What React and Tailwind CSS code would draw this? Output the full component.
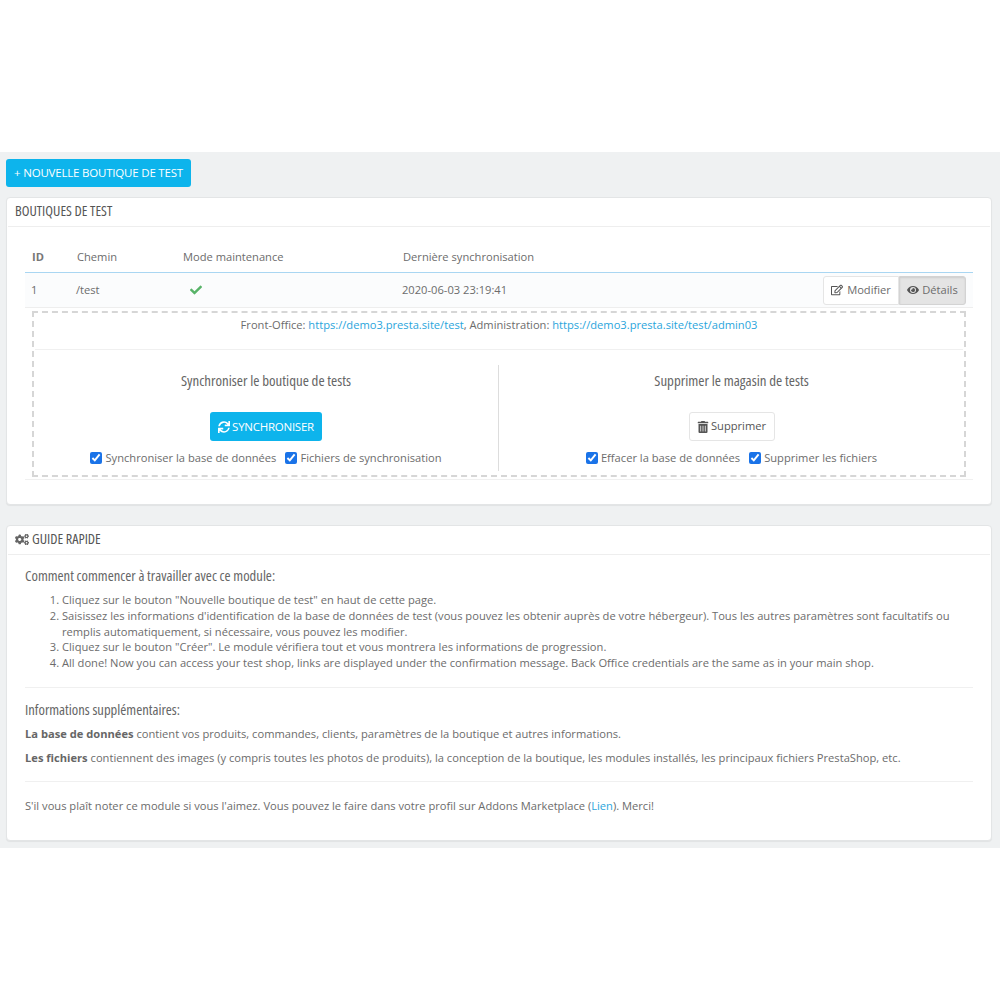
import React from "react";
import { FaCheck, FaCogs, FaEye, FaRegEdit, FaSync, FaTrashAlt } from "react-icons/fa";

const sans = "font-['Open_Sans','Liberation_Sans',sans-serif]";
const head = "font-['Open_Sans','Liberation_Sans',sans-serif] [font-stretch:75%]";

function Check({ label }) {
  return (
    <label className="flex items-center gap-[3px]">
      <input type="checkbox" checked readOnly className="m-0 w-[12px] h-[12px] accent-[#1a73e8]" />
      <span>{label}</span>
    </label>
  );
}

function Link({ children }) {
  return <a className="text-[#2aa5dc]">{children}</a>;
}

function PanelHeader({ children }) {
  return (
    <div className={`h-[29px] mx-px pb-[2px] border-b border-[#eeeeee] flex items-center gap-[3px] pl-[7px] text-[14.2px] text-[#555555] ${head}`}>
      {children}
    </div>
  );
}

export default function App() {
  return (
    <div className={`w-[1000px] h-[1000px] bg-white text-[#6c6c6c] text-[11.15px] ${sans}`}>
      <div className="h-[152px]" />
      <div className="h-[696px] bg-[#eff1f2] pt-[7px] pl-[6px] pr-[8px]">
        <button className="h-[28px] w-[185px] rounded-[3px] bg-[#0db4ec] text-white text-[11.5px] flex items-center justify-center whitespace-nowrap tracking-[-0.2px]">
          + NOUVELLE BOUTIQUE DE TEST
        </button>

        <section className="mt-[10px] h-[308px] bg-white rounded-[4px] border border-[#e3e5e6] shadow-[0_1px_1px_rgba(0,0,0,0.06)]">
          <PanelHeader>BOUTIQUES DE TEST</PanelHeader>
          <div className="mx-[18px]">
            <div className="mt-[16px] h-[30px] pb-[1px] border-b border-[#a9d6f2] grid grid-cols-[45px_106px_220px_1fr] pl-[7px] items-center">
              <span className="font-bold text-[#777777]">ID</span>
              <span>Chemin</span>
              <span>Mode maintenance</span>
              <span>Dernière synchronisation</span>
            </div>
            <div className="h-[35px] bg-[#fbfcfd] border-b border-[#eeeeee] grid grid-cols-[45px_106px_220px_1fr] pl-[7px] items-center">
              <span className="-ml-[1px]">1</span>
              <span className="-ml-[1px]">/test</span>
              <span className="pl-[7px]"><FaCheck className="w-[12px] h-[12px] text-[#58b368]" /></span>
              <div className="flex items-center justify-between -ml-[1px] pr-[7px]">
                <span>2020-06-03 23:19:41</span>
                <div className="flex h-[29px]">
                  <span className="w-[76px] flex items-center justify-center gap-[4px] bg-white border border-[#e5e5e5] rounded-l-[3px]">
                    <FaRegEdit className="w-[12px] h-[12px] text-[#555555]" /> Modifier
                  </span>
                  <span className="w-[67px] flex items-center justify-center gap-[3px] bg-[#e4e4e4] border border-[#d3d3d3] rounded-r-[3px] shadow-[inset_0_1px_2px_rgba(0,0,0,0.1)]">
                    <FaEye className="w-[12px] h-[12px] text-[#555555]" /> Détails
                  </span>
                </div>
              </div>
            </div>
            <div className="mt-[3px] mx-[7px] h-[166px] border-2 border-dashed border-[#d6d6d6] flex flex-col">
              <div className="h-[37px] border-b border-[#f0f0f0] mx-[1px] text-center pt-[4px]">
                Front-Office: <Link>https://demo3.presta.site/test</Link>, Administration: <Link>https://demo3.presta.site/test/admin03</Link>
              </div>
              <div className="flex mt-[15px]">
                <div className="w-[465px] h-[106px] border-r border-[#dddddd] flex flex-col items-center">
                  <h3 className={`mt-[6px] text-[14.9px] text-[#666666] leading-[18px] ${head}`}>Synchroniser le boutique de tests</h3>
                  <button className="mt-[23px] h-[29px] w-[112px] rounded-[3px] bg-[#0db4ec] text-white flex items-center justify-center gap-[2px] text-[11.5px] tracking-[-0.25px]">
                    <FaSync className="w-[12px] h-[12px]" /> SYNCHRONISER
                  </button>
                  <div className="mt-[9px] flex gap-[9px] h-[16px]">
                    <Check label="Synchroniser la base de données" />
                    <Check label="Fichiers de synchronisation" />
                  </div>
                </div>
                <div className="flex-1 h-[106px] flex flex-col items-center">
                  <h3 className={`mt-[6px] text-[14.9px] text-[#666666] leading-[18px] ${head}`}>Supprimer le magasin de tests</h3>
                  <button className="mt-[23px] h-[29px] w-[86px] rounded-[3px] bg-white border border-[#e5e5e5] text-[#555555] flex items-center justify-center gap-[2px]">
                    <FaTrashAlt className="w-[12px] h-[12px] text-[#555555]" /> Supprimer
                  </button>
                  <div className="mt-[9px] flex gap-[9px] h-[16px]">
                    <Check label="Effacer la base de données" />
                    <Check label="Supprimer les fichiers" />
                  </div>
                </div>
              </div>
            </div>
            <div className="mt-[2px] border-t border-[#f0f0f0]" />
          </div>
        </section>

        <section className="mt-[20px] h-[316px] bg-white rounded-[4px] border border-[#e3e5e6] shadow-[0_1px_1px_rgba(0,0,0,0.06)]">
          <PanelHeader><FaCogs className="w-[14px] h-[13px] text-[#666666]" /> GUIDE RAPIDE</PanelHeader>
          <div className="mx-[18px] leading-[15.8px]">
            <h4 className={`mt-[11px] text-[14.6px] text-[#666666] leading-[18px] ${head}`}>Comment commencer à travailler avec ce module:</h4>
            <ol className="mt-[8px] ml-[37px] list-decimal">
              <li>Cliquez sur le bouton "Nouvelle boutique de test" en haut de cette page.</li>
              <li>Saisissez les informations d'identification de la base de données de test (vous pouvez les obtenir auprès de votre hébergeur). Tous les autres paramètres sont facultatifs ou remplis automatiquement, si nécessaire, vous pouvez les modifier.</li>
              <li>Cliquez sur le bouton "Créer". Le module vérifiera tout et vous montrera les informations de progression.</li>
              <li>All done! Now you can access your test shop, links are displayed under the confirmation message. Back Office credentials are the same as in your main shop.</li>
            </ol>
            <div className="mt-[16px] border-t border-[#f0f0f0]" />
            <h4 className={`mt-[12px] text-[14.6px] text-[#666666] leading-[18px] ${head}`}>Informations supplémentaires:</h4>
            <p className="mt-[8px]"><b className="text-[#666666]">La base de données</b> contient vos produits, commandes, clients, paramètres de la boutique et autres informations.</p>
            <p className="mt-[8px]"><b className="text-[#666666]">Les fichiers</b> contiennent des images (y compris toutes les photos de produits), la conception de la boutique, les modules installés, les principaux fichiers PrestaShop, etc.</p>
            <div className="mt-[15px] border-t border-[#f0f0f0]" />
            <p className="mt-[16px]">S'il vous plaît noter ce module si vous l'aimez. Vous pouvez le faire dans votre profil sur Addons Marketplace (<Link>Lien</Link>). Merci!</p>
          </div>
        </section>
      </div>
    </div>
  );
}
